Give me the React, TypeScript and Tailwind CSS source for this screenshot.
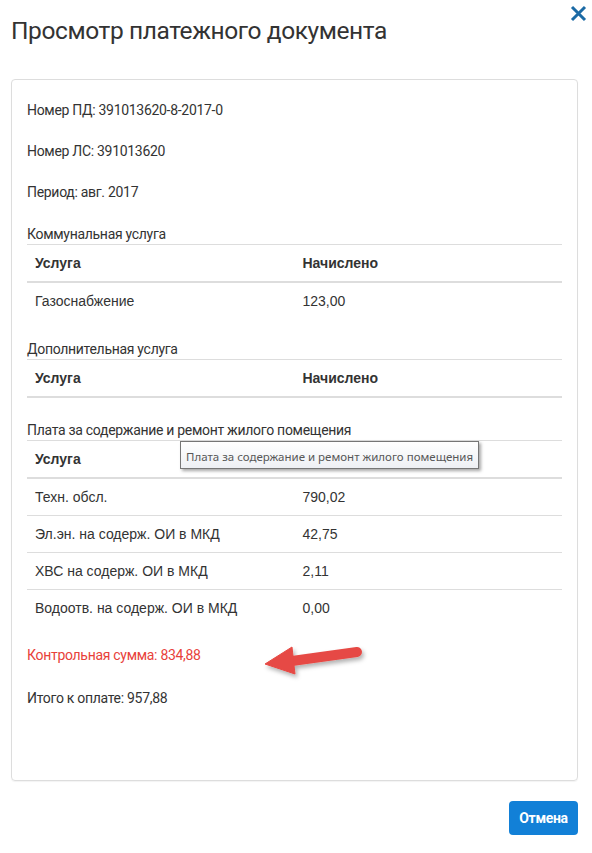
import React from "react";

type Row = { name: string; value: string };

const sections: { title: string; rows: Row[]; tooltip?: boolean; gap: string }[] = [
  { title: "Коммунальная услуга", rows: [{ name: "Газоснабжение", value: "123,00" }], gap: "mb-[20px]" },
  { title: "Дополнительная услуга", rows: [], gap: "mb-[22px]" },
  {
    title: "Плата за содержание и ремонт жилого помещения",
    tooltip: true,
    gap: "mb-[19px]",
    rows: [
      { name: "Техн. обсл.", value: "790,02" },
      { name: "Эл.эн. на содерж. ОИ в МКД", value: "42,75" },
      { name: "ХВС на содерж. ОИ в МКД", value: "2,11" },
      { name: "Водоотв. на содерж. ОИ в МКД", value: "0,00" },
    ],
  },
];

const roboto = "font-['Roboto',sans-serif]";
const arial = "font-['Liberation_Sans',Arial,sans-serif]";

function ServiceTable({ title, rows, tooltip, gap }: { title: string; rows: Row[]; tooltip?: boolean; gap: string }) {
  return (
    <div className={`relative ${gap}`}>
      <div className={`${roboto} text-[14px] leading-[20px] tracking-[-0.3px] text-[#333] border-b border-[#ddd]`}>
        {title}
      </div>
      <table className={`${arial} w-full table-fixed text-[14px] leading-[20px] text-[#333]`}>
        <thead>
          <tr className="border-b-2 border-[#ddd]">
            <th className="w-1/2 px-2 py-2 text-left font-bold">Услуга</th>
            <th className="w-1/2 px-2 py-2 text-left font-bold">Начислено</th>
          </tr>
        </thead>
        <tbody>
          {rows.map((r, i) => (
            <tr key={i} className={i > 0 ? "border-t border-[#ddd]" : ""}>
              <td className="px-2 py-2">{r.name}</td>
              <td className="px-2 py-2">{r.value}</td>
            </tr>
          ))}
        </tbody>
      </table>
      {tooltip && (
        <div className="absolute left-[153px] top-[21px] border border-[#767676] bg-gradient-to-b from-white to-[#eef0f4] px-[5px] py-[1px] shadow-[2px_2px_3px_rgba(0,0,0,0.35)]">
          <span className="font-['Noto_Sans',sans-serif] text-[11.5px] leading-[14px] text-[#575757] whitespace-nowrap">
            Плата за содержание и ремонт жилого помещения
          </span>
        </div>
      )}
    </div>
  );
}

export default function App() {
  return (
    <div className="relative w-[592px] h-[853px] bg-white pl-[11px] pr-[14px]">
      {/* Close */}
      <button className="absolute right-[5px] top-[5px] text-[#1b6aa5]" aria-label="close">
        <svg width="17" height="17" viewBox="0 0 17 17">
          <path d="M2 2 L15 15 M15 2 L2 15" stroke="currentColor" strokeWidth="3" />
        </svg>
      </button>

      <h1 className={`${roboto} pt-[15px] text-[24.5px] leading-[32px] tracking-[-0.4px] text-[#333]`}>
        Просмотр платежного документа
      </h1>

      {/* Card */}
      <div className="relative mt-[32px] h-[702px] rounded-[4px] border border-[#ddd] px-[15px] pt-[20px] shadow-[0_1px_1px_rgba(0,0,0,0.05)]">
        <div className={`${roboto} text-[14px] leading-[20px] tracking-[-0.3px] text-[#333]`}>
          <p className="mb-[21px]">Номер ПД: 391013620-8-2017-0</p>
          <p className="mb-[21px]">Номер ЛС: 391013620</p>
          <p className="mb-[22px]">Период: авг. 2017</p>
        </div>

        {sections.map((s, i) => (
          <ServiceTable key={i} title={s.title} rows={s.rows} tooltip={s.tooltip} gap={s.gap} />
        ))}

        <div className={`${roboto} text-[14px] leading-[20px] tracking-[-0.3px]`}>
          <p className="mb-[23px] text-[#e8413a]">Контрольная сумма: 834,88</p>
          <p className="text-[#333]">Итого к оплате: 957,88</p>
        </div>

        {/* annotation arrow */}
        <svg className="absolute left-[250px] top-[560px]" width="125" height="50" viewBox="0 0 125 50">
          <defs>
            <filter id="sh" x="-20%" y="-40%" width="150%" height="200%">
              <feDropShadow dx="2" dy="3" stdDeviation="2" floodColor="#000" floodOpacity="0.3" />
            </filter>
          </defs>
          <g filter="url(#sh)" fill="#e64a44" stroke="#e64a44">
            <path d="M30 21 L95 12" strokeWidth="10" strokeLinecap="round" fill="none" />
            <path d="M3 24 L30 7 L33 34 Z" strokeWidth="1" strokeLinejoin="round" />
          </g>
        </svg>
      </div>

      <div className="mt-[20px] flex justify-end">
        <button className={`${roboto} h-[34px] w-[69px] rounded-[4px] bg-[#1280d7] text-[14px] font-bold tracking-[-0.3px] text-white`}>
          Отмена
        </button>
      </div>
    </div>
  );
}
